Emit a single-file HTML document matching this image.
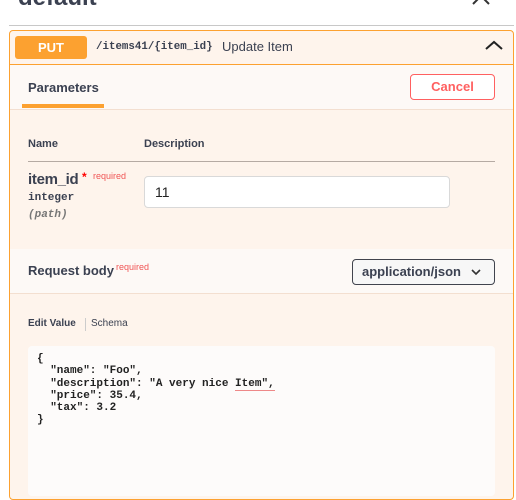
<!DOCTYPE html>
<html><head><meta charset="utf-8"><style>
*{margin:0;padding:0;box-sizing:border-box}
body{width:516px;height:484px;overflow:hidden;background:#fff;font-family:"Liberation Sans",sans-serif;color:#3b4151;position:relative}
.a{position:absolute;white-space:nowrap}
.mono{font-family:"Liberation Mono",monospace}
</style></head><body>
<div class="a" style="left:18px;top:-17px;font-size:24px;font-weight:bold;line-height:30px">default</div>
<svg class="a" style="left:470px;top:-6px" width="22" height="14"><path d="M3 10 L11 2 L19 10" stroke="#333" stroke-width="2" fill="none"/></svg>
<div class="a" style="left:9px;top:25px;width:505px;height:1px;background:#c8c8c8"></div>
<div class="a" style="left:9px;top:30px;width:505px;height:470px;border:1px solid #fca130;border-radius:4px;background:#fef4ec"></div>
<div class="a" style="left:10px;top:64px;width:503px;height:1px;background:#fca130"></div>
<div class="a" style="left:15px;top:36px;width:72px;height:23px;background:#fca130;border-radius:3px;color:#fff;font-weight:bold;font-size:13px;text-align:center;line-height:23px">PUT</div>
<div class="a mono" style="left:96px;top:39px;font-size:10.8px;font-weight:bold;line-height:16px">/items41/{item_id}</div>
<div class="a" style="left:222px;top:39px;font-size:13px;line-height:16px">Update Item</div>
<svg class="a" style="left:484px;top:38px" width="20" height="14"><path d="M2 11 L10 4 L18 11" stroke="#222" stroke-width="2" fill="none"/></svg>
<div class="a" style="left:10px;top:65px;width:503px;height:45px;background:#fdf9f6;border-bottom:1px solid #f3dfd0"></div>
<div class="a" style="left:28px;top:80px;font-size:13px;font-weight:bold;line-height:16px">Parameters</div>
<div class="a" style="left:22px;top:104px;width:82px;height:4px;background:#fca130"></div>
<div class="a" style="left:410px;top:74px;width:85px;height:26px;border:1px solid #ff6060;border-radius:4px;color:#ff6060;font-weight:bold;font-size:13px;text-align:center;line-height:24px;background:#fff">Cancel</div>
<div class="a" style="left:28px;top:138px;font-size:11px;font-weight:bold;line-height:13px">Name</div>
<div class="a" style="left:144px;top:138px;font-size:11px;font-weight:bold;line-height:13px">Description</div>
<div class="a" style="left:28px;top:161px;width:467px;height:1px;background:#b5aaa3"></div>
<div class="a" style="left:28px;top:170px;font-size:15px;font-weight:bold;line-height:19px;letter-spacing:-0.3px">item_id</div>
<div class="a" style="left:82px;top:170px;font-size:12px;font-weight:bold;color:#f00">*</div>
<div class="a" style="left:93px;top:171px;font-size:9px;color:#f05555">required</div>
<div class="a mono" style="left:28px;top:192px;font-size:11px;font-weight:bold">integer</div>
<div class="a mono" style="left:28px;top:209px;font-size:11px;font-style:italic;font-weight:bold;color:#777">(path)</div>
<div class="a" style="left:144px;top:176px;width:306px;height:32px;background:#fff;border:1px solid #d9d9d9;border-radius:4px;font-size:14px;padding-left:10px;line-height:30px;color:#222">11</div>
<div class="a" style="left:10px;top:249px;width:503px;height:45px;background:#fdf9f6;border-bottom:1px solid #f3dfd0"></div>
<div class="a" style="left:28px;top:263px;font-size:13px;font-weight:bold;line-height:16px">Request body</div>
<div class="a" style="left:116px;top:262px;font-size:9px;color:#f05555">required</div>
<div class="a" style="left:352px;top:259px;width:143px;height:26px;border:1px solid #41444e;border-radius:4px;background:#f7f7f7;font-size:13px;font-weight:bold;line-height:24px;padding-left:9px">application/json</div>
<svg class="a" style="left:470px;top:267px" width="12" height="10"><path d="M2 3 L6 7 L10 3" stroke="#333" stroke-width="1.6" fill="none"/></svg>
<div class="a" style="left:28px;top:318px;font-size:10px;font-weight:bold;line-height:12px">Edit Value</div>
<div class="a" style="left:85px;top:318px;width:1px;height:13px;background:#ccc"></div>
<div class="a" style="left:91px;top:318px;font-size:10px;line-height:12px">Schema</div>
<div class="a" style="left:28px;top:346px;width:467px;height:150px;background:#fdfbfa;border-radius:4px"></div>
<pre class="a mono" style="white-space:pre;left:37px;top:353px;font-size:11px;font-weight:bold;line-height:12.3px;color:#222">{
  "name": "Foo",
  "description": "A very nice <span style="border-bottom:1px solid #e88">Item",</span>
  "price": 35.4,
  "tax": 3.2
}</pre>
</body></html>
